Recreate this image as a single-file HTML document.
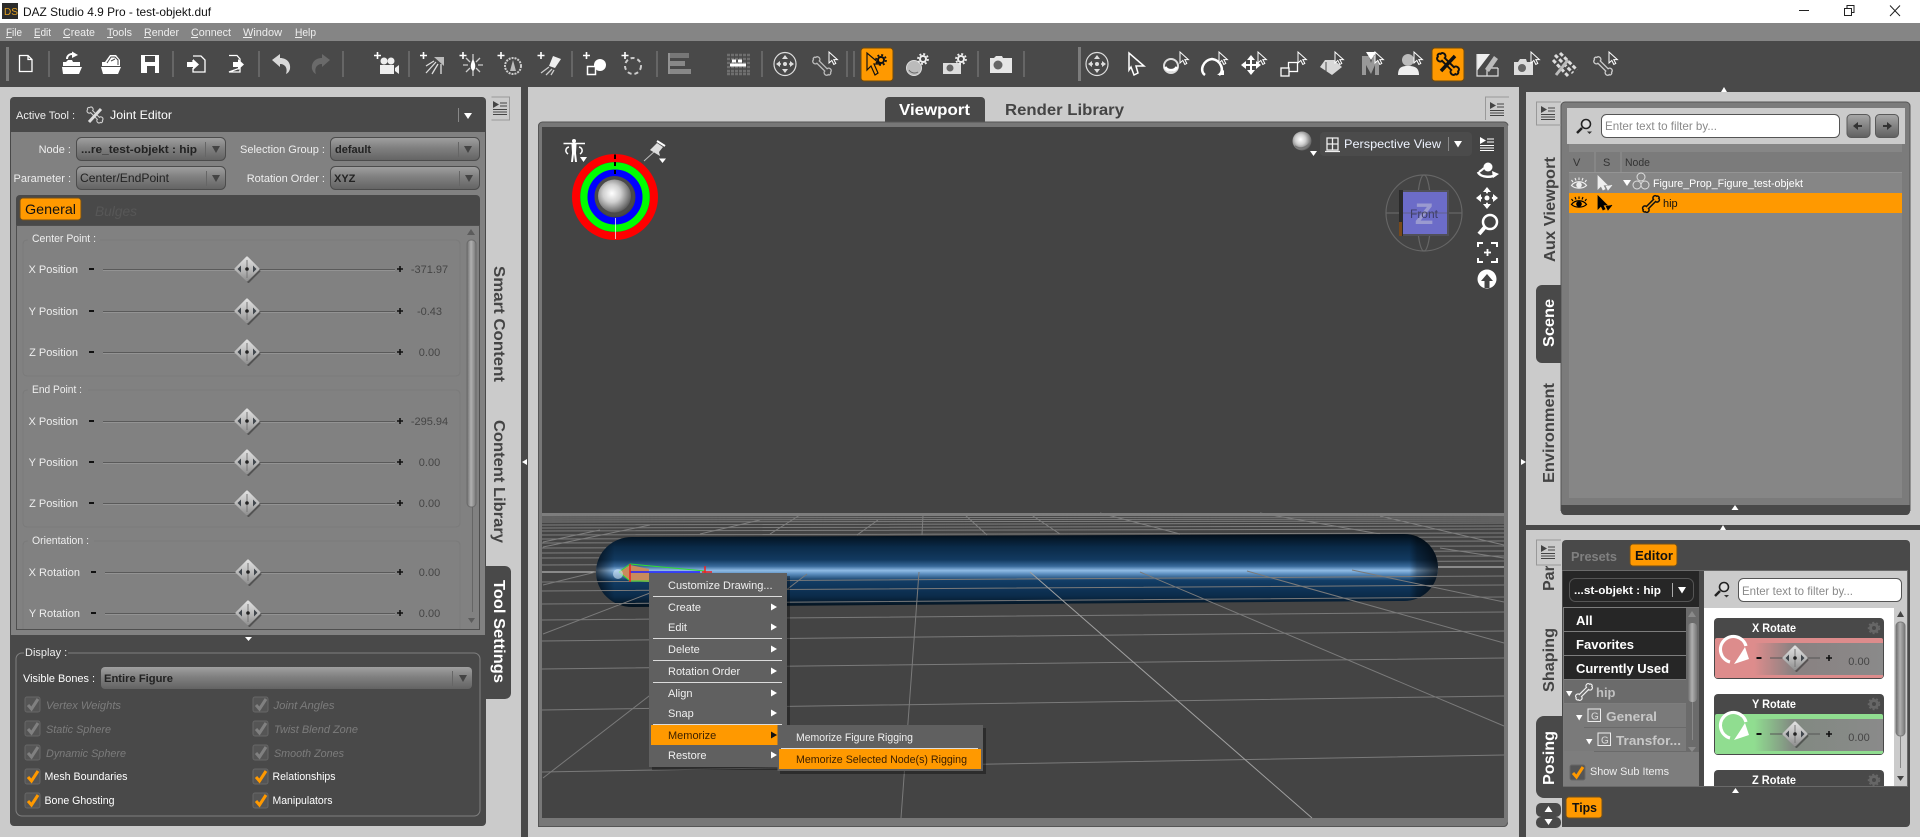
<!DOCTYPE html>
<html>
<head>
<meta charset="utf-8">
<title>DAZ Studio 4.9 Pro - test-objekt.duf</title>
<style>
html,body{margin:0;padding:0;background:#cbcbcb;overflow:hidden;width:1920px;height:837px}
svg{display:block;font-size:11px}
text{font-family:"Liberation Sans",Arial,sans-serif;white-space:pre}
</style>
</head>
<body>
<svg xmlns="http://www.w3.org/2000/svg" width="1920" height="837" viewBox="0 0 1920 837">
<defs>
<linearGradient id="cb" x1="0" y1="0" x2="0" y2="1"><stop offset="0" stop-color="#a0a0a0"/><stop offset=".45" stop-color="#808080"/><stop offset="1" stop-color="#636363"/></linearGradient>
<linearGradient id="btn" x1="0" y1="0" x2="0" y2="1"><stop offset="0" stop-color="#a8a8a8"/><stop offset="1" stop-color="#5f5f5f"/></linearGradient>
<linearGradient id="dg" x1="0" y1="0" x2="0" y2="1"><stop offset="0" stop-color="#dedede"/><stop offset=".55" stop-color="#b8b8b8"/><stop offset="1" stop-color="#929292"/></linearGradient>
<linearGradient id="th" x1="0" y1="0" x2="1" y2="0"><stop offset="0" stop-color="#6e6e6e"/><stop offset=".45" stop-color="#b0b0b0"/><stop offset="1" stop-color="#777"/></linearGradient>
<linearGradient id="cap" gradientUnits="userSpaceOnUse" x1="0" y1="535" x2="0" y2="606"><stop offset="0" stop-color="#03101c"/><stop offset=".17" stop-color="#0a2a48"/><stop offset=".35" stop-color="#123a60"/><stop offset=".44" stop-color="#39699a"/><stop offset=".5" stop-color="#90bce6"/><stop offset=".55" stop-color="#5b8dbd"/><stop offset=".64" stop-color="#123d66"/><stop offset=".86" stop-color="#0b2b4a"/><stop offset="1" stop-color="#04131f"/></linearGradient>
<linearGradient id="capx" gradientUnits="userSpaceOnUse" x1="596" y1="0" x2="1438" y2="0"><stop offset="0" stop-color="#000" stop-opacity=".65"/><stop offset=".022" stop-color="#000" stop-opacity="0"/><stop offset=".966" stop-color="#000" stop-opacity="0"/><stop offset=".975" stop-color="#000" stop-opacity=".35"/><stop offset="1" stop-color="#000" stop-opacity=".75"/></linearGradient>
<radialGradient id="ball" cx=".42" cy=".42" r=".6"><stop offset="0" stop-color="#fff"/><stop offset=".45" stop-color="#d0d0d0"/><stop offset="1" stop-color="#5e5e5e"/></radialGradient>
<linearGradient id="fade" x1="0" y1="0" x2="1" y2="0"><stop offset="0" stop-color="#808080" stop-opacity="0"/><stop offset=".3" stop-color="#808080" stop-opacity=".9"/><stop offset="1" stop-color="#8a8a8a"/></linearGradient>

<g id="dia"><path d="M0-11L11 0L0 11L-11 0Z" transform="translate(1.5,2)" fill="#000" opacity=".35" stroke="#000" stroke-width="2" stroke-linejoin="round"/><path d="M0-11L11 0L0 11L-11 0Z" fill="url(#dg)" stroke="url(#dg)" stroke-width="3" stroke-linejoin="round"/><path d="M-9.500 0L-6-3.500V3.500ZM9.500 0L6-3.500V3.500Z" fill="#40464c"/><path d="M0-9V9" stroke="#777" stroke-width="1"/><circle r="1.800" fill="#222"/></g>
<g id="sl"><rect x="89" y="-1" width="5" height="2" fill="#111"/><path d="M103 .5H395" stroke="#5a5a5a"/><path d="M103 1.5H395" stroke="#a0a0a0" opacity=".6"/><path d="M397 0h6M400-3v6" stroke="#111" stroke-width="1.6"/><use href="#dia" x="247"/></g>
<g id="slr"><rect x="91" y="-1" width="5" height="2" fill="#111"/><path d="M105 .5H395" stroke="#5a5a5a"/><path d="M105 1.5H395" stroke="#a0a0a0" opacity=".6"/><path d="M397 0h6M400-3v6" stroke="#111" stroke-width="1.6"/><use href="#dia" x="248"/></g>
<g id="mi"><path d="M0 0L6 3.500L0 7Z"/><path d="M7 2H14M7 5H14M0 8.500H14M0 11H14M0 13.500H14" stroke="currentColor" fill="none" stroke-width="1"/></g>
<path id="cur" d="M0 0V11L2.800 8.400L4.800 12.400L6.800 11.400L4.800 7.600H8.400Z" fill="#494949" stroke="#fff" stroke-width="1"/>
<g id="ton"><rect x="0" y="0" width="15" height="15" rx="2" fill="#555" stroke="#666"/><path d="M3 8L6.500 12L13 2" stroke="#ff9900" stroke-width="3" fill="none"/></g>
<g id="toff"><rect x="0" y="0" width="15" height="15" rx="2" fill="#555" stroke="#666"/><path d="M3 8L6.500 12L13 2" stroke="#808080" stroke-width="3" fill="none"/></g>
<path id="bone" d="M-5-1.500H5C5-4 9.500-4.500 9.500-1.500C11-1 11 1.500 9.500 1.500C9.500 4.500 5 4 5 1.500H-5C-5 4-9.500 4.500-9.500 1.500C-11 1-11-1-9.500-1.500C-9.500-4.500-5-4-5-1.500Z"/>
<g id="gr"><circle r="3" fill="none" stroke="currentColor" stroke-width="2"/><circle r="5" fill="none" stroke="currentColor" stroke-width="1.800" stroke-dasharray="2 1.930"/></g>
<g id="eye" fill="none" stroke="currentColor"><path d="M-7.500 1.500C-4-3.500 4-3.500 7.500 1.500C4 5-4 5-7.500 1.500Z" stroke-width="1.200"/><circle cy="1" r="2.800" fill="currentColor" stroke="none"/><path d="M-6-2L-7.500-4M-3-3.500L-4-6M0-4V-6.500M3-3.500L4-6M6-2L7.500-4" stroke-width="1.100"/></g>
</defs>

<!-- base -->
<rect width="1920" height="837" fill="#cbcbcb"/>
<!-- title bar -->
<rect width="1920" height="23" fill="#fff"/>
<rect x="2" y="3" width="16" height="16" fill="#2b2b2b"/>
<text x="4" y="15" font-size="10" fill="#e3a020">DS</text>
<text x="23" y="16" font-size="12" fill="#111" textLength="188" lengthAdjust="spacingAndGlyphs">DAZ Studio 4.9 Pro - test-objekt.duf</text>
<path d="M1799 10.500H1809" stroke="#222"/>
<path d="M1844.500 8.500h7v7h-7zM1847 8V5.500h7v7h-2" stroke="#222" fill="none"/>
<path d="M1890 5.500L1900 16M1900 5.500L1890 16" stroke="#222" fill="none"/>

<!-- menu bar -->
<rect y="23" width="1920" height="18" fill="#858585"/>
<g fill="#eee">
<text x="6" y="36" textLength="16" lengthAdjust="spacingAndGlyphs">File</text>
<text x="34" y="36" textLength="17" lengthAdjust="spacingAndGlyphs">Edit</text>
<text x="63" y="36" textLength="32" lengthAdjust="spacingAndGlyphs">Create</text>
<text x="107" y="36" textLength="25" lengthAdjust="spacingAndGlyphs">Tools</text>
<text x="144" y="36" textLength="35" lengthAdjust="spacingAndGlyphs">Render</text>
<text x="191" y="36" textLength="40" lengthAdjust="spacingAndGlyphs">Connect</text>
<text x="243" y="36" textLength="39" lengthAdjust="spacingAndGlyphs">Window</text>
<text x="295" y="36" textLength="21" lengthAdjust="spacingAndGlyphs">Help</text>
</g>
<path d="M6 37.500h6M34 37.500h6M63 37.500h7M107 37.500h6M144 37.500h7M191 37.500h7M243 37.500h9M295 37.500h7" stroke="#eee"/>

<!-- toolbar -->
<rect y="41" width="1920" height="46" fill="#494949"/>
<g fill="#666">
<rect x="6" y="47" width="3" height="34" fill="#7c7c7c"/>
<rect x="48" y="51" width="2" height="26"/><rect x="172" y="51" width="2" height="26"/><rect x="258" y="51" width="2" height="26"/><rect x="342" y="51" width="2" height="26"/><rect x="408" y="51" width="2" height="26"/><rect x="571" y="51" width="2" height="26"/><rect x="656" y="51" width="2" height="26"/><rect x="761" y="51" width="2" height="26"/><rect x="846" y="51" width="2" height="26"/><rect x="853" y="51" width="2" height="26"/><rect x="977" y="51" width="2" height="26"/><rect x="1023" y="51" width="2" height="26"/>
<rect x="1078" y="47" width="3" height="34" fill="#7c7c7c"/>
</g>
<!-- doc -->
<path d="M19.500 55.500H28L32 59.500V71.500H19.500Z M28 55.500V59.500H32" fill="none" stroke="#fff" stroke-width="1.300"/>
<!-- open -->
<path d="M63 66V62H66L68 60H72L73 62H80V66Z" fill="#fff"/><path d="M62 67H82L79 74H63Z" fill="#fff"/><path d="M67 59C67 55 71 53 74 54.500" stroke="#fff" stroke-width="2" fill="none"/><path d="M72 51.500L78 55L72 58Z" fill="#fff"/>
<!-- recent -->
<path d="M102 66V62H105L110 55H116L120 60V66Z" fill="#fff"/><path d="M101 67H121L118 74H103Z" fill="#fff"/><path d="M107 63L111 57H115L118 60V65" stroke="#494949" fill="none"/><path d="M111 61L115 59" stroke="#494949"/>
<!-- save -->
<path d="M141 55H159V73H141Z" fill="#fff"/><rect x="145" y="56" width="10" height="6" fill="#494949"/><rect x="147" y="66" width="8" height="7" fill="#494949"/>
<!-- import/export -->
<path d="M193 56H201L205 60V72H193V68M193 62V60" fill="none" stroke="#fff" stroke-width="1.300"/><path d="M187 62H193V59L199 64.500L193 70V67H187Z" fill="#fff"/>
<path d="M229 55.500H237L240 59V62M240 68V72H229Z" fill="none" stroke="#fff" stroke-width="1.300"/><path d="M233 62H238V59L244 64.500L238 70V67H233Z" fill="#fff"/>
<!-- undo redo -->
<path d="M272 60L280 54V58C287 58 291 63 290 69C289 72 288 73 286 74C288 68 285 64 280 64V67Z" fill="#d8d8d8"/>
<path d="M330 60L322 54V58C315 58 311 63 312 69C313 72 314 73 316 74C314 68 317 64 322 64V67Z" fill="#6a6a6a"/>
<!-- pluses -->
<path d="M374 55.500h7M377.500 52v7M420 55.500h7M423.500 52v7M459.500 55.500h7M463 52v7M497.500 55.500h7M501 52v7M537.500 55.500h7M541 52v7M583 55.500h7M586.500 52v7M621.500 55.500h7M625 52v7" stroke="#fff" stroke-width="1.600"/>
<!-- camera add -->
<circle cx="384" cy="61" r="3.500" fill="#eee"/><circle cx="391" cy="61" r="3.500" fill="#eee"/><path d="M380 65H394V74H380ZM395 68L399 65V74L395 71Z" fill="#eee"/>
<!-- distant light -->
<path d="M426 73L436 62M432 74L438 64M441 74L441 64M426 66L434 61" stroke="#ddd" stroke-width="1.300" fill="none"/><path d="M434 57H444V66Z" fill="#bbb"/>
<!-- point light -->
<path d="M473 54V60M473 70V76M463 65H468M478 65H483M466 58L470 62M480 58L476 62M466 72L470 68M480 72L476 68" stroke="#ccc" stroke-width="1.300"/><path d="M473 59C476 64 476 69 473 71C470 69 470 64 473 59Z" fill="#fff"/>
<!-- linear -->
<circle cx="513" cy="66" r="8" fill="none" stroke="#ccc" stroke-width="2" stroke-dasharray="2 1"/><path d="M513 60L516 71H510Z" fill="#bbb"/>
<!-- spot -->
<path d="M553 56L561 59L555 68L549 66Z" fill="#eee"/><path d="M541 73L549 67M546 75L552 69M551 75L554 70" stroke="#ccc" stroke-width="1.300"/>
<!-- primitive -->
<circle cx="600" cy="65" r="6" fill="#fff"/><rect x="587.500" y="66.500" width="8" height="8" fill="#494949" stroke="#fff" stroke-width="1.500"/>
<!-- null -->
<circle cx="633" cy="66" r="8" fill="none" stroke="#ccc" stroke-width="2" stroke-dasharray="4 3"/>
<!-- align, grid -->
<path d="M669 53V74" stroke="#ddd"/><rect x="670" y="53" width="19" height="5" fill="#777"/><rect x="670" y="61" width="15" height="5" fill="#888"/><rect x="670" y="69" width="21" height="5" fill="#888"/>
<path d="M727 55h24M727 59h24M727 63h24M727 67h24M727 71h24M727 74h24" stroke="#6f6f6f" stroke-width="2.500" stroke-dasharray="3 1"/><path d="M732 61h4M738 61h4M730 65h16" stroke="#fff" stroke-width="3"/>
<!-- manips -->
<g id="man"><ellipse cx="785" cy="64" rx="11" ry="11.500" fill="none" stroke="#ddd" stroke-width="1.200"/><path d="M785 55L788 59H782ZM785 73L788 69H782ZM776 64L780 61V67ZM794 64L790 61V67Z" fill="#ddd"/><circle cx="785" cy="64" r="2" fill="#ddd"/><circle cx="780" cy="64" r="1" fill="#ddd"/><circle cx="790" cy="64" r="1" fill="#ddd"/></g>
<use href="#bone" transform="translate(822,66) rotate(45) scale(1.100)" fill="none" stroke="#bbb" stroke-width="1.200"/>
<use href="#cur" x="829" y="52"/>
<!-- active orange -->
<rect x="861" y="48" width="32" height="33" rx="3" fill="#ff9900" stroke="#6e4a10"/>
<path d="M867 53V70L871 66L875 75L878 73L874 64H880Z" fill="#ff9900" stroke="#111" stroke-width="1.200"/><use href="#gr" x="881" y="60" color="#111"/>
<circle cx="914" cy="68" r="7.500" fill="#bbb" stroke="#ddd"/><path d="M909 70C911 73 915 74 918 72" stroke="#666" fill="none"/><use href="#gr" x="923" y="59" color="#eee"/>
<path d="M943 63H961V74H943Z" fill="#ddd"/><circle cx="950" cy="68" r="3.500" fill="#666"/><use href="#gr" x="961" y="59" color="#eee"/>
<path d="M990 58H994L996 56H1002L1003 58H1012V73H990Z" fill="#e6e6e6"/><circle cx="998" cy="65" r="4.500" fill="#666"/>
<use href="#man" x="312"/>
<path d="M1129 53V70L1131 67L1134 75L1138 73L1136 66H1144Z" fill="none" stroke="#fff" stroke-width="1.500"/>
<circle cx="1171" cy="66" r="7" fill="none" stroke="#ddd" stroke-width="2"/><path d="M1165 67a7 7 0 0 0 12 0" stroke="#fff" stroke-width="3" fill="none"/><use href="#cur" x="1180" y="52"/>
<path d="M1205 75C1199 71 1203 60 1212 59C1221 60 1225 71 1219 75" fill="none" stroke="#fff" stroke-width="2.500"/><path d="M1217 75h7v-5z" fill="#fff"/><use href="#cur" x="1219" y="52"/>
<path d="M1251 55L1255 60H1247ZM1251 75L1255 70H1247ZM1241 65L1246 61V69ZM1261 65L1256 61V69Z" fill="#fff"/><path d="M1251 58V72M1244 65H1258" stroke="#fff" stroke-width="2"/><use href="#cur" x="1258" y="52"/>
<rect x="1288.500" y="62.500" width="9" height="9" fill="none" stroke="#fff" stroke-width="1.300"/><rect x="1281" y="68" width="8" height="8" fill="#494949" stroke="#fff" stroke-width="1.300"/><use href="#cur" x="1298" y="52"/>
<path d="M1325 60H1334L1342 67L1332 75L1320 67Z" fill="#d8d8d8"/><path d="M1326 62V72" stroke="#494949"/><use href="#cur" x="1335" y="52"/>
<path d="M1362 75V56H1369L1371 63L1373 56H1379V75H1375V65L1371 74L1366 65V75Z" fill="#999"/><path d="M1366 52H1376L1371 60Z" fill="#fff"/><use href="#cur" x="1375" y="52"/>
<circle cx="1408" cy="60" r="6" fill="#bbb"/><path d="M1398 75C1398 67 1402 66 1408 66C1414 66 1419 67 1419 75Z" fill="#eee"/><use href="#cur" x="1414" y="52"/>
<rect x="1432" y="48" width="32" height="33" rx="3" fill="#ff9900" stroke="#6e4a10"/>
<use href="#bone" transform="translate(1448,64) rotate(45) scale(1.300)" fill="none" stroke="#111" stroke-width="1.500"/><path d="M1441 71L1455 56" stroke="#111" stroke-width="3.500"/>
<path d="M1477 54H1490L1477 71Z" fill="#eee"/><path d="M1477 54V76H1498V68M1487 76V68H1498" fill="none" stroke="#ddd" stroke-width="1.200"/><path d="M1485 69L1494 56L1498 59L1489 72Z" fill="#bbb"/>
<path d="M1514 62H1518L1520 59H1526L1527 62H1533V75H1514Z" fill="#ddd"/><circle cx="1522" cy="68" r="4" fill="#666"/><use href="#cur" x="1531" y="52"/>
<path d="M1555 55L1573 73M1553 60L1568 76M1560 53L1577 70" stroke="#ddd" stroke-width="3" stroke-dasharray="4 2"/><path d="M1556 75L1568 60" stroke="#bbb" stroke-width="3"/>
<use href="#bone" transform="translate(1603,66) rotate(45) scale(1.100)" fill="none" stroke="#ccc" stroke-width="1.200"/><use href="#cur" x="1609" y="52"/>

<!-- splitters -->
<rect x="521" y="87" width="7" height="750" fill="#494949"/>
<rect x="1519" y="87" width="7" height="750" fill="#494949"/>
<path d="M522 462L527 459V465Z" fill="#fff"/>
<path d="M1526 462L1521 459V465Z" fill="#fff"/>
<rect x="1526" y="87" width="394" height="5" fill="#494949"/>
<path d="M1724 87L1721 92H1727Z" fill="#fff"/>
<rect x="1526" y="525" width="394" height="5" fill="#494949"/>
<path d="M1723 525L1720 530H1726Z" fill="#fff"/>

<!-- ============ LEFT PANEL ============ -->
<rect x="10" y="97" width="476" height="729" rx="4" fill="#494949"/>
<rect x="11" y="132" width="474" height="503" fill="#818181"/>
<text x="16" y="119" fill="#eee">Active Tool :</text>
<use href="#bone" transform="translate(95,115) rotate(45) scale(.95)" fill="none" stroke="#ccc" stroke-width="1.200"/><path d="M89 122L101 109" stroke="#ddd" stroke-width="3"/>
<text x="110" y="119" fill="#fff" font-size="12" textLength="62" lengthAdjust="spacingAndGlyphs">Joint Editor</text>
<path d="M458.500 108V122" stroke="#888"/><path d="M464 113H472L468 119Z" fill="#fff"/>

<text x="71" y="153" fill="#eee" text-anchor="end">Node :</text>
<rect x="76.500" y="137.500" width="149" height="23" rx="5" fill="url(#cb)" stroke="#4c4c4c"/>
<text x="81" y="153" fill="#222" font-weight="bold" textLength="116" lengthAdjust="spacingAndGlyphs">...re_test-objekt : hip</text>
<path d="M205.500 142V157" stroke="#666"/><path d="M212 146H220L216 153Z" fill="#444"/>
<text x="325" y="153" fill="#eee" text-anchor="end">Selection Group :</text>
<rect x="330.500" y="137.500" width="149" height="23" rx="5" fill="url(#cb)" stroke="#4c4c4c"/>
<text x="335" y="153" fill="#222" font-weight="bold">default</text>
<path d="M458.500 142V157" stroke="#666"/><path d="M464 146H472L468 153Z" fill="#444"/>
<text x="71" y="182" fill="#eee" text-anchor="end">Parameter :</text>
<rect x="76.500" y="166.500" width="149" height="23" rx="5" fill="url(#cb)" stroke="#4c4c4c"/>
<text x="80" y="182" fill="#222" font-size="12" textLength="89" lengthAdjust="spacingAndGlyphs">Center/EndPoint</text>
<path d="M206.500 171V186" stroke="#666"/><path d="M212 175H220L216 182Z" fill="#444"/>
<text x="325" y="182" fill="#eee" text-anchor="end">Rotation Order :</text>
<rect x="330.500" y="166.500" width="149" height="23" rx="5" fill="url(#cb)" stroke="#4c4c4c"/>
<text x="334" y="182" fill="#222" font-weight="bold">XYZ</text>
<path d="M459.500 171V186" stroke="#666"/><path d="M465 175H473L469 182Z" fill="#444"/>

<path d="M16 225V199a4 4 0 0 1 4-4H476a4 4 0 0 1 4 4V225Z" fill="#494949"/>
<rect x="20" y="198" width="61" height="22" rx="3" fill="#ff9900" stroke="#6e5020"/>
<text x="25" y="214" font-size="14" fill="#111" textLength="51" lengthAdjust="spacingAndGlyphs">General</text>
<text x="95" y="216" font-size="14" font-style="italic" fill="#575757" textLength="42" lengthAdjust="spacingAndGlyphs">Bulges</text>

<rect x="16.500" y="225.500" width="463" height="404" fill="#818181" stroke="#4f4f4f"/>
<!-- group boxes -->
<path d="M100 240H456a4 4 0 0 1 4 4V372a4 4 0 0 1-4 4H27a4 4 0 0 1-4-4V244a4 4 0 0 1 4-4H28" fill="none" stroke="#7a7a7a"/>
<path d="M88 390H456a4 4 0 0 1 4 4V523a4 4 0 0 1-4 4H27a4 4 0 0 1-4-4V394a4 4 0 0 1 4-4H28" fill="none" stroke="#7a7a7a"/>
<path d="M94 541H456a4 4 0 0 1 4 4V629M23 629V545a4 4 0 0 1 4-4H28" fill="none" stroke="#7a7a7a"/>
<g fill="#eee">
<text x="32" y="242" textLength="64" lengthAdjust="spacingAndGlyphs">Center Point :</text>
<text x="32" y="393" textLength="50" lengthAdjust="spacingAndGlyphs">End Point :</text>
<text x="32" y="544" textLength="57" lengthAdjust="spacingAndGlyphs">Orientation :</text>
<text x="78" y="273" text-anchor="end">X Position</text>
<text x="78" y="315" text-anchor="end">Y Position</text>
<text x="78" y="356" text-anchor="end">Z Position</text>
<text x="78" y="425" text-anchor="end">X Position</text>
<text x="78" y="466" text-anchor="end">Y Position</text>
<text x="78" y="507" text-anchor="end">Z Position</text>
<text x="80" y="576" text-anchor="end">X Rotation</text>
<text x="80" y="617" text-anchor="end">Y Rotation</text>
</g>
<g fill="#454545" text-anchor="middle">
<text x="429.500" y="273">-371.97</text>
<text x="429.500" y="315">-0.43</text>
<text x="429.500" y="356">0.00</text>
<text x="429.500" y="425">-295.94</text>
<text x="429.500" y="466">0.00</text>
<text x="429.500" y="507">0.00</text>
<text x="429.500" y="576">0.00</text>
<text x="429.500" y="617">0.00</text>
</g>
<use href="#sl" y="269"/><use href="#sl" y="311"/><use href="#sl" y="352"/>
<use href="#sl" y="421"/><use href="#sl" y="462"/><use href="#sl" y="503"/>
<use href="#slr" y="572"/><use href="#slr" y="613"/>
<!-- scrollbar -->
<path d="M471 229L475 235H467Z" fill="#5c5c5c"/>
<rect x="467" y="240" width="9" height="267" rx="4" fill="url(#th)" stroke="#6a6a6a"/>
<path d="M472.500 507V612" stroke="#666"/>
<path d="M468 618H475L471.500 623Z" fill="#5c5c5c"/>

<!-- display -->
<path d="M245 637H252L248.500 641Z" fill="#fff"/>
<path d="M68 653H474a6 6 0 0 1 6 6V810a6 6 0 0 1-6 6H22a6 6 0 0 1-6-6V659a6 6 0 0 1 6-6H24" fill="none" stroke="#808080"/>
<text x="25" y="656" fill="#eee">Display :</text>
<text x="23" y="682" fill="#fff" textLength="72" lengthAdjust="spacingAndGlyphs">Visible Bones :</text>
<rect x="101" y="667" width="371" height="22" rx="4" fill="url(#cb)"/>
<text x="104" y="682" fill="#222" font-weight="bold" textLength="69" lengthAdjust="spacingAndGlyphs">Entire Figure</text>
<path d="M452.500 671V686" stroke="#666"/><path d="M459 675H467L463 682Z" fill="#444"/>
<use href="#toff" x="25" y="697"/><use href="#toff" x="25" y="721"/><use href="#toff" x="25" y="745"/>
<use href="#ton" x="25" y="769"/><use href="#ton" x="25" y="793"/>
<use href="#toff" x="253" y="697"/><use href="#toff" x="253" y="721"/><use href="#toff" x="253" y="745"/>
<use href="#ton" x="253" y="769"/><use href="#ton" x="253" y="793"/>
<g fill="#7c7c7c" font-style="italic">
<text x="46" y="709" textLength="75" lengthAdjust="spacingAndGlyphs">Vertex Weights</text>
<text x="46" y="733" textLength="65" lengthAdjust="spacingAndGlyphs">Static Sphere</text>
<text x="46" y="757" textLength="80" lengthAdjust="spacingAndGlyphs">Dynamic Sphere</text>
<text x="273.500" y="709" textLength="61" lengthAdjust="spacingAndGlyphs">Joint Angles</text>
<text x="274" y="733" textLength="84" lengthAdjust="spacingAndGlyphs">Twist Blend Zone</text>
<text x="274" y="757" textLength="70" lengthAdjust="spacingAndGlyphs">Smooth Zones</text>
</g>
<g fill="#fff">
<text x="44.500" y="780" textLength="83" lengthAdjust="spacingAndGlyphs">Mesh Boundaries</text>
<text x="44.500" y="804" textLength="70" lengthAdjust="spacingAndGlyphs">Bone Ghosting</text>
<text x="272.500" y="780" textLength="63" lengthAdjust="spacingAndGlyphs">Relationships</text>
<text x="272.500" y="804" textLength="60" lengthAdjust="spacingAndGlyphs">Manipulators</text>
</g>

<!-- left side tabs -->
<path d="M491.500 97H509.500V120H491.500" fill="none" stroke="#999"/>
<use href="#mi" x="493" y="102" fill="#444" color="#444" transform="translate(0,-1)"/>
<path d="M486 566H505a6 6 0 0 1 6 6V693a6 6 0 0 1-6 6H486Z" fill="#494949"/>
<text transform="translate(494,580) rotate(90)" fill="#fff" font-weight="bold" font-size="16" textLength="103" lengthAdjust="spacingAndGlyphs">Tool Settings</text>
<text transform="translate(494,266) rotate(90)" fill="#444" font-weight="bold" font-size="16" textLength="116" lengthAdjust="spacingAndGlyphs">Smart Content</text>
<text transform="translate(494,420) rotate(90)" fill="#444" font-weight="bold" font-size="16" textLength="123" lengthAdjust="spacingAndGlyphs">Content Library</text>

<!-- ============ VIEWPORT ============ -->
<path d="M885 122V101a4 4 0 0 1 4-4H981a4 4 0 0 1 4 4V122Z" fill="#494949"/>
<text x="899" y="115" font-size="16" font-weight="bold" fill="#fff" textLength="71" lengthAdjust="spacingAndGlyphs">Viewport</text>
<text x="1005" y="115" font-size="16" font-weight="bold" fill="#444" textLength="119" lengthAdjust="spacingAndGlyphs">Render Library</text>
<path d="M1509 97H1485.500V120" fill="none" stroke="#999"/>
<use href="#mi" x="1490" y="102" fill="#444" color="#444"/>
<path d="M538 827V126a4 4 0 0 1 4-4H1504a4 4 0 0 1 4 4V823a4 4 0 0 1-4 4Z" fill="#777"/>
<path d="M538.500 827V126a4 4 0 0 1 4-4H1504a4 4 0 0 1 4 3.500" fill="none" stroke="#555"/>
<path d="M538 826.500H1504a4 4 0 0 0 3.500-4" fill="none" stroke="#555"/>
<rect x="542" y="127" width="962" height="691" fill="#444"/>

<!-- grid behind capsule -->
<g stroke="#7e7e7e" stroke-width="1" fill="none">
<rect x="542" y="513" width="962" height="3" fill="#7d7d7d" stroke="none"/>
<path d="M542 516L1504 515M542 518L1504 517M542 520L1504 519M542 522L1504 521M542 525L1504 523M542 528L1504 526M542 531L1504 529M542 535L1504 533M542 539L1504 537M542 543L1504 541M542 548L1504 546M542 553L1504 551M542 558L1504 556M542 565L1504 561"/>
<path d="M964 514L987 535M923 515L922 535M878 520L857 535M1100 513L1180 534M1260 513L1380 534M1380 516L1504 545M1440 548L1504 558M760 520L700 534M650 525L543 547M600 530L543 542M800 515L770 534M1030 514L1060 534"/>
<path d="M542 572H600M1435 567H1504" stroke="#d0d0d0"/>
</g>
<!-- capsule -->
<path d="M632 537L1404 534A34 33.500 0 0 1 1404 601L632 607A36 35 0 0 1 632 537Z" fill="url(#cap)"/>
<path d="M632 537L1404 534A34 33.500 0 0 1 1404 601L632 607A36 35 0 0 1 632 537Z" fill="url(#capx)"/>
<!-- grid front -->
<g stroke="#7a7a7a" stroke-width="1" fill="none">
<path d="M542 582L1504 576M542 591L1504 585M542 604L1504 597M542 620L1504 612M542 641L1504 631M542 669L1504 658M542 710L1504 696M542 772L1504 755"/>
<path d="M807 574L543 778M919 572L901 818M1140 572L1504 726M1247 571L1504 643M1352 570L1504 602M650 593L543 634M596 572L543 585"/>
<path d="M1030 572L1312 818" stroke="#a0a0a0"/>
</g>
<!-- manipulator -->
<path d="M619 572L630 565L649 569V582L630 581Z" fill="#c98a5c"/>
<path d="M619 572L630 564L705 571M619 572L630 581L650 581" stroke="#30e030" stroke-width="1" fill="none"/>
<path d="M630 572H700" stroke="#2020ff" stroke-width="1.500"/>
<path d="M630 564V582M705 566V573M702 572H712" stroke="#f02020" stroke-width="1.500"/>
<circle cx="618" cy="574" r="5" fill="#cfe2f4" opacity=".6"/>

<!-- viewport overlays -->
<g fill="none">
<circle cx="615" cy="197" r="39" stroke="#ff0000" stroke-width="8"/>
<circle cx="615" cy="197" r="31" stroke="#00ff00" stroke-width="7.500"/>
<circle cx="615" cy="197" r="24" stroke="#0000ff" stroke-width="7"/>
</g>
<path d="M615 154.500V159M615 162V166M615 170V174" stroke="#000" stroke-width="2"/>
<path d="M615.500 218V239" stroke="#eee" opacity=".8"/>
<circle cx="614.500" cy="196" r="20" fill="#4a4a4a"/>
<circle cx="614.500" cy="196" r="16.500" fill="url(#ball)"/>
<!-- figure icon -->
<circle cx="574" cy="141" r="2" fill="#fff"/><path d="M563.500 143.500H585" stroke="#fff" stroke-width="1.500"/><path d="M571.500 144H576.500L576 153L577 162H575L574 154L573 162H571L572 153Z" fill="#fff"/><path d="M569 147C565 148 565 152 568 154M579 147C583 148 583 152 580 154" stroke="#fff" stroke-width="1.500" fill="none"/>
<path d="M580 157H587L583.500 162Z" fill="#fff"/>
<!-- pin -->
<path d="M644 161L655 151" stroke="#bbb"/><path d="M652 148L657 143L663 147L659 152L660 156L650 150Z" fill="#ddd"/><path d="M657 141L665 146" stroke="#fff" stroke-width="2"/>
<path d="M659 158.500H666L662.500 163Z" fill="#fff"/>
<!-- sphere -->
<circle cx="1302" cy="141" r="9.500" fill="url(#ball)"/><path d="M1295 146C1299 149 1305 149 1310 143" stroke="#777" fill="none" stroke-width="1.500"/>
<path d="M1310 151H1317L1313.500 156Z" fill="#fff"/>
<rect x="1320" y="132" width="152" height="24" rx="4" fill="#4b4b4b"/>
<path d="M1327 138H1338V150H1327ZM1332.500 138V150M1327 144H1338M1325 151.500H1340" stroke="#eee" stroke-width="1.300" fill="none"/>
<text x="1344" y="148" fill="#eef3ff" font-size="12" textLength="97" lengthAdjust="spacingAndGlyphs">Perspective View</text>
<path d="M1448.500 137V151" stroke="#888"/><path d="M1454 141H1462L1458 147.500Z" fill="#fff"/>
<use href="#mi" x="1480" y="137" fill="#fff" color="#fff"/>
<!-- nav icons -->
<circle cx="1488" cy="167" r="4.500" fill="#fff"/><path d="M1478 172C1480 178 1494 178 1496 174" stroke="#fff" stroke-width="2.500" fill="none"/><path d="M1479 172C1482 170 1483 169 1484 168" stroke="#fff" stroke-width="2"/><path d="M1492 171L1499 174L1493 178Z" fill="#fff"/>
<path d="M1487 187L1491 192H1483ZM1487 209L1491 204H1483ZM1476 198L1481 194V202ZM1498 198L1493 194V202Z" fill="#fff"/><circle cx="1487" cy="198" r="2.500" fill="#fff"/><circle cx="1481" cy="198" r="1.200" fill="#fff"/><circle cx="1493" cy="198" r="1.200" fill="#fff"/><circle cx="1487" cy="192.500" r="1" fill="#fff"/><circle cx="1487" cy="203.500" r="1" fill="#fff"/>
<circle cx="1490" cy="222" r="7" fill="none" stroke="#fff" stroke-width="2.500"/><path d="M1485 227L1479 234" stroke="#fff" stroke-width="4"/>
<path d="M1478 247V243H1483M1491 243H1497V247M1497 258V262H1491M1483 262H1478V258" fill="none" stroke="#fff" stroke-width="2"/><path d="M1484 252.500H1491M1487.500 249V256" stroke="#fff" stroke-width="1.800"/>
<circle cx="1487" cy="279" r="9.500" fill="#fff"/><path d="M1487 274L1493 281H1489.500V288H1484.500V281H1481Z" fill="#444"/>
<!-- cube -->
<g fill="none" stroke="#666" stroke-width="1.200"><circle cx="1424" cy="213" r="38"/><ellipse cx="1424" cy="213" rx="7" ry="38"/><path d="M1386 213H1462"/></g>
<rect x="1399" y="190" width="50" height="46" fill="#505058"/>
<rect x="1399" y="190" width="4" height="46" fill="#2a2a2a"/><rect x="1399" y="222" width="3" height="14" fill="#7a4a1a"/>
<rect x="1403" y="192" width="44" height="42" fill="#6c6cc8"/>
<text x="1424" y="224" font-size="30" font-weight="bold" text-anchor="middle" fill="#9a9ad0">Z</text>
<text x="1424" y="218" font-size="12" text-anchor="middle" fill="#3d3d68">Front</text>
<path d="M1403 213H1447" stroke="#555" opacity=".5"/>

<!-- context menu -->
<rect x="652" y="576" width="138" height="194" fill="#000" opacity=".35"/>
<rect x="649" y="573" width="138" height="194" fill="#606060"/>
<g stroke="#dcdcdc" stroke-width="1"><path d="M653 596.500H782M653 638.500H782M653 660.500H782M653 682.500H782M653 724.500H782"/></g>
<rect x="651" y="725" width="127" height="20" fill="#ff9900"/>
<g fill="#f0f0f0">
<text x="668" y="589">Customize Drawing...</text>
<text x="668" y="611">Create</text>
<text x="668" y="631">Edit</text>
<text x="668" y="653">Delete</text>
<text x="668" y="675">Rotation Order</text>
<text x="668" y="697">Align</text>
<text x="668" y="717">Snap</text>
<text x="668" y="739" fill="#3d2000">Memorize</text>
<text x="668" y="759">Restore</text>
</g>
<path d="M771 603.500L777 607L771 610.500ZM771 623.500L777 627L771 630.500ZM771 645.500L777 649L771 652.500ZM771 667.500L777 671L771 674.500ZM771 689.500L777 693L771 696.500ZM771 709.500L777 713L771 716.500ZM771 751.500L777 755L771 758.500Z" fill="#fff"/>
<path d="M771 731.500L777 735L771 738.500Z" fill="#111"/>
<rect x="780" y="728" width="206" height="46" fill="#000" opacity=".35"/>
<rect x="777.500" y="725" width="205.500" height="46" fill="#606060"/>
<path d="M781 748.500H978" stroke="#dcdcdc"/>
<rect x="779" y="749" width="202" height="20" fill="#ff9900"/>
<text x="796" y="741" fill="#f0f0f0" textLength="117" lengthAdjust="spacingAndGlyphs">Memorize Figure Rigging</text>
<text x="796" y="763" fill="#3d2000" textLength="171" lengthAdjust="spacingAndGlyphs">Memorize Selected Node(s) Rigging</text>

<!-- ============ TOP RIGHT PANEL ============ -->
<path d="M1561 106a4 4 0 0 1 4-4H1906a4 4 0 0 1 4 4V511a4 4 0 0 1-4 4H1565a4 4 0 0 1-4-4Z" fill="#7b7b7b"/>
<path d="M1561 511V106a4 4 0 0 1 4-4H1906a4 4 0 0 1 4 4V511" fill="none" stroke="#555"/>
<path d="M1561 505H1910V511a4 4 0 0 1-4 4H1565a4 4 0 0 1-4-4Z" fill="#494949"/>
<path d="M1735 505L1731.500 510H1738.500Z" fill="#fff"/>
<rect x="1569" y="144" width="333" height="354" fill="#868686"/>
<rect x="1567" y="108" width="338" height="36" fill="#cbcbcb"/>
<circle cx="1586" cy="124" r="4.500" fill="#ddd" stroke="#222" stroke-width="1.600"/><path d="M1582 128L1577 133" stroke="#222" stroke-width="2.500"/><path d="M1587 131.500H1592L1589.500 134Z" fill="#333"/>
<rect x="1601.500" y="114.500" width="238" height="23" rx="5" fill="#fff" stroke="#555"/>
<text x="1605" y="130" font-size="12" fill="#8a8a8a" textLength="112" lengthAdjust="spacingAndGlyphs">Enter text to filter by...</text>
<rect x="1847" y="114.500" width="23" height="23" rx="4" fill="url(#btn)" stroke="#5a5a5a"/><path d="M1853 126L1858 122V125H1862V127H1858V130Z" fill="#333"/>
<rect x="1875.500" y="114.500" width="23" height="23" rx="4" fill="url(#btn)" stroke="#5a5a5a"/><path d="M1892 126L1887 122V125H1883V127H1887V130Z" fill="#333"/>
<rect x="1569" y="152" width="25" height="20" fill="#7b7b7b"/><rect x="1596" y="152" width="24" height="20" fill="#7b7b7b"/><rect x="1622" y="152" width="280" height="20" fill="#7b7b7b"/>
<text x="1573" y="166" fill="#333">V</text><text x="1603" y="166" fill="#333">S</text><text x="1625" y="166" fill="#333" textLength="25" lengthAdjust="spacingAndGlyphs">Node</text>
<path d="M1569 172.500H1902" stroke="#949494"/>
<rect x="1569" y="193" width="333" height="20" fill="#ff9900"/>
<use href="#eye" x="1579" y="184" color="#eee"/>
<path d="M1598 176V189L1601 186L1603 190L1605 189L1603 185H1607ZM1606 186L1608 190L1612 185" fill="#eee" stroke="#eee" stroke-width=".8"/>
<path d="M1623 180H1631L1627 186Z" fill="#fff"/>
<circle cx="1641" cy="177" r="4" fill="none" stroke="#ddd"/><circle cx="1637" cy="185" r="4" fill="none" stroke="#ddd"/><circle cx="1645" cy="185" r="4" fill="none" stroke="#ddd"/>
<text x="1653" y="187" fill="#fff" textLength="150" lengthAdjust="spacingAndGlyphs">Figure_Prop_Figure_test-objekt</text>
<use href="#eye" x="1579" y="203" color="#000"/>
<path d="M1598 196V209L1601 206L1603 210L1605 209L1603 205H1607ZM1606 206L1608 210L1612 205" fill="#000" stroke="#000" stroke-width=".8"/>
<use href="#bone" transform="translate(1651,204) rotate(-45)" fill="none" stroke="#111" stroke-width="1.500"/>
<text x="1663" y="207" fill="#111">hip</text>
<path d="M1561 102H1536.500V125H1561" fill="none" stroke="#999"/>
<use href="#mi" x="1541" y="106" fill="#444" color="#444"/>
<path d="M1561 285H1542a6 6 0 0 0-6 6V357a6 6 0 0 0 6 6H1561Z" fill="#494949"/>
<text transform="translate(1555,262) rotate(-90)" fill="#444" font-size="16" font-weight="bold" textLength="105" lengthAdjust="spacingAndGlyphs">Aux Viewport</text>
<text transform="translate(1554,347) rotate(-90)" fill="#fff" font-size="16" font-weight="bold" textLength="48" lengthAdjust="spacingAndGlyphs">Scene</text>
<text transform="translate(1554,483) rotate(-90)" fill="#444" font-size="16" font-weight="bold" textLength="100" lengthAdjust="spacingAndGlyphs">Environment</text>

<!-- ============ BOTTOM RIGHT PANEL ============ -->
<path d="M1562 716H1544a8 8 0 0 0-8 8V790a8 8 0 0 0 8 8H1562Z" fill="#494949"/>
<text transform="translate(1554,785) rotate(-90)" fill="#fff" font-size="16" font-weight="bold" textLength="54" lengthAdjust="spacingAndGlyphs">Posing</text>
<text transform="translate(1554,692) rotate(-90)" fill="#444" font-size="16" font-weight="bold" textLength="64" lengthAdjust="spacingAndGlyphs">Shaping</text>
<text transform="translate(1554,591) rotate(-90)" fill="#444" font-size="16" font-weight="bold">Par</text>
<rect x="1530" y="540" width="32" height="26" fill="#cbcbcb"/>
<path d="M1561 540H1536.500V565H1561" fill="none" stroke="#999"/>
<use href="#mi" x="1541" y="545" fill="#444" color="#444"/>
<rect x="1536" y="803" width="25" height="14" rx="5" fill="#494949"/><rect x="1536" y="817" width="25" height="11" rx="5" fill="#494949"/>
<path d="M1548.500 806L1544.500 812H1552.500ZM1544.500 819H1552.500L1548.500 825Z" fill="#fff"/>

<path d="M1562 544a4 4 0 0 1 4-4H1906a4 4 0 0 1 4 4V823a4 4 0 0 1-4 4H1562Z" fill="#494949"/>
<text x="1571" y="561" font-size="13" font-weight="bold" fill="#808080" textLength="46" lengthAdjust="spacingAndGlyphs">Presets</text>
<rect x="1630" y="544" width="47" height="22" rx="3" fill="#ff9900" stroke="#6e5020"/>
<text x="1635" y="560" font-size="13" font-weight="bold" fill="#111" textLength="38" lengthAdjust="spacingAndGlyphs">Editor</text>
<rect x="1563" y="571" width="344" height="215" fill="#cbcbcb"/>
<!-- left col -->
<rect x="1563" y="571" width="136" height="215" fill="#7d7d7d"/>
<rect x="1563" y="571" width="136" height="36" fill="#262626"/>
<rect x="1569.500" y="578.500" width="124" height="23" rx="6" fill="#262626" stroke="#555"/>
<text x="1574" y="594" fill="#fff" font-weight="bold" textLength="87" lengthAdjust="spacingAndGlyphs">...st-objekt : hip</text>
<path d="M1672.500 583V597" stroke="#aaa"/><path d="M1678 587H1686L1682 593.500Z" fill="#fff"/>
<rect x="1564" y="608" width="122" height="23" fill="#262626"/><rect x="1564" y="632" width="122" height="23" fill="#262626"/><rect x="1564" y="656" width="122" height="23" fill="#262626"/>
<g fill="#fff" font-weight="bold">
<text x="1576" y="625" font-size="13">All</text>
<text x="1576" y="649" font-size="13" textLength="58" lengthAdjust="spacingAndGlyphs">Favorites</text>
<text x="1576" y="673" font-size="13" textLength="93" lengthAdjust="spacingAndGlyphs">Currently Used</text>
</g>
<rect x="1564" y="680" width="122" height="23" fill="#6b6b6b"/>
<rect x="1564" y="704" width="122" height="47" fill="#7a7a7a"/>
<path d="M1584 727.500H1686M1594 751.500H1686" stroke="#6a6a6a"/>
<path d="M1566 691H1572.500L1569.200 696.500Z" fill="#fff"/>
<use href="#bone" transform="translate(1584,692) rotate(-45)" fill="none" stroke="#eee" stroke-width="1.200"/>
<text x="1596" y="697" font-size="13" font-weight="bold" fill="#c0c0c0">hip</text>
<path d="M1576 715H1582.500L1579.200 720.500Z" fill="#fff"/>
<rect x="1588" y="709" width="12.500" height="12.500" fill="none" stroke="#eee"/><text x="1591" y="719.500" font-size="10" fill="#ddd">G</text>
<text x="1606" y="721" font-size="13" font-weight="bold" fill="#c8c8c8" textLength="51" lengthAdjust="spacingAndGlyphs">General</text>
<path d="M1586 739H1592.500L1589.200 744.500Z" fill="#fff"/>
<rect x="1598" y="733" width="12.500" height="12.500" fill="none" stroke="#eee"/><text x="1601" y="743.500" font-size="10" fill="#ddd">G</text>
<text x="1616" y="745" font-size="13" font-weight="bold" fill="#c8c8c8" textLength="65" lengthAdjust="spacingAndGlyphs">Transfor...</text>
<rect x="1686" y="608" width="13" height="144" fill="#6b6b6b"/>
<path d="M1692 611L1696 617H1688Z" fill="#8a8a8a"/><path d="M1688 747H1696L1692 752Z" fill="#8a8a8a"/>
<rect x="1688" y="623" width="9" height="79" rx="4" fill="url(#th)"/>
<path d="M1692.500 702V740" stroke="#888"/>
<use href="#ton" x="1570" y="765"/>
<text x="1590" y="775" fill="#eee" textLength="79" lengthAdjust="spacingAndGlyphs">Show Sub Items</text>
<rect x="1699" y="571" width="5" height="215" fill="#494949"/>
<!-- right col -->
<rect x="1704" y="571" width="203" height="37" fill="#cbcbcb"/>
<circle cx="1724" cy="587" r="4.500" fill="#ddd" stroke="#222" stroke-width="1.600"/><path d="M1720 591L1715 596" stroke="#222" stroke-width="2.500"/><path d="M1724 595H1729L1726.500 597.500Z" fill="#333"/>
<rect x="1738.500" y="578.500" width="163" height="23" rx="5" fill="#fff" stroke="#555"/>
<text x="1742" y="595" font-size="12" fill="#8a8a8a" textLength="111" lengthAdjust="spacingAndGlyphs">Enter text to filter by...</text>
<rect x="1704" y="608" width="190" height="178" fill="#fff"/>
<rect x="1894" y="608" width="13" height="178" fill="#cbcbcb"/>
<path d="M1900.500 611L1904 617H1897Z" fill="#444"/><path d="M1897 776H1904L1900.500 781Z" fill="#444"/>
<rect x="1896" y="622" width="9" height="114" rx="4" fill="url(#th)" stroke="#777"/>
<path d="M1900.500 736V768" stroke="#888"/>
<!-- cards -->
<rect x="1714" y="618" width="170" height="61" rx="4" fill="#494949"/>
<rect x="1715" y="638" width="168" height="40" rx="2" fill="#dd8c8c"/>
<rect x="1754" y="643" width="129" height="32" fill="url(#fade)"/>
<text x="1752" y="632" fill="#fff" font-size="12" font-weight="bold" textLength="44" lengthAdjust="spacingAndGlyphs">X Rotate</text>
<g id="gear"><circle cx="1874" cy="628" r="3.500" fill="none" stroke="#666" stroke-width="3"/><circle cx="1874" cy="628" r="5.500" fill="none" stroke="#666" stroke-width="1.500" stroke-dasharray="2 2"/></g>
<g id="rot"><path d="M1730 662A13 13 0 1 1 1746 646" fill="none" stroke="#fff" stroke-width="3.200"/><path d="M1734 664L1749 659L1745 647L1740 655Z" fill="#fff"/></g>
<g id="mini"><path d="M1770 658H1820" stroke="#555"/><use href="#dia" x="1795" y="658"/><rect x="1756.500" y="657" width="5" height="2" fill="#111"/><path d="M1826 658h6M1829 655v6" stroke="#111" stroke-width="1.600"/></g>
<text x="1859" y="665" text-anchor="middle" fill="#454545">0.00</text>

<rect x="1714" y="694" width="170" height="61" rx="4" fill="#494949"/>
<rect x="1715" y="714" width="168" height="40" rx="2" fill="#90dd90"/>
<rect x="1754" y="719" width="129" height="32" fill="url(#fade)"/>
<text x="1752" y="708" fill="#fff" font-size="12" font-weight="bold" textLength="44" lengthAdjust="spacingAndGlyphs">Y Rotate</text>
<use href="#gear" y="76"/><use href="#rot" y="76"/><use href="#mini" y="76"/>
<text x="1859" y="741" text-anchor="middle" fill="#454545">0.00</text>

<rect x="1714" y="770" width="170" height="30" rx="4" fill="#494949"/>
<text x="1752" y="784" fill="#fff" font-size="12" font-weight="bold" textLength="44" lengthAdjust="spacingAndGlyphs">Z Rotate</text>
<use href="#gear" y="152"/>

<rect x="1562" y="786" width="348" height="37" fill="#494949"/>
<path d="M1562 570.500H1907.500V786.500H1563" fill="none" stroke="#6a6a6a"/>
<path d="M1735.500 788L1732 793H1739Z" fill="#fff"/>
<rect x="1566" y="797" width="36" height="21" rx="3" fill="#ff9900" stroke="#6e5020"/>
<text x="1572" y="812" font-size="13" font-weight="bold" fill="#111" textLength="25" lengthAdjust="spacingAndGlyphs">Tips</text>
</svg>
</body>
</html>
